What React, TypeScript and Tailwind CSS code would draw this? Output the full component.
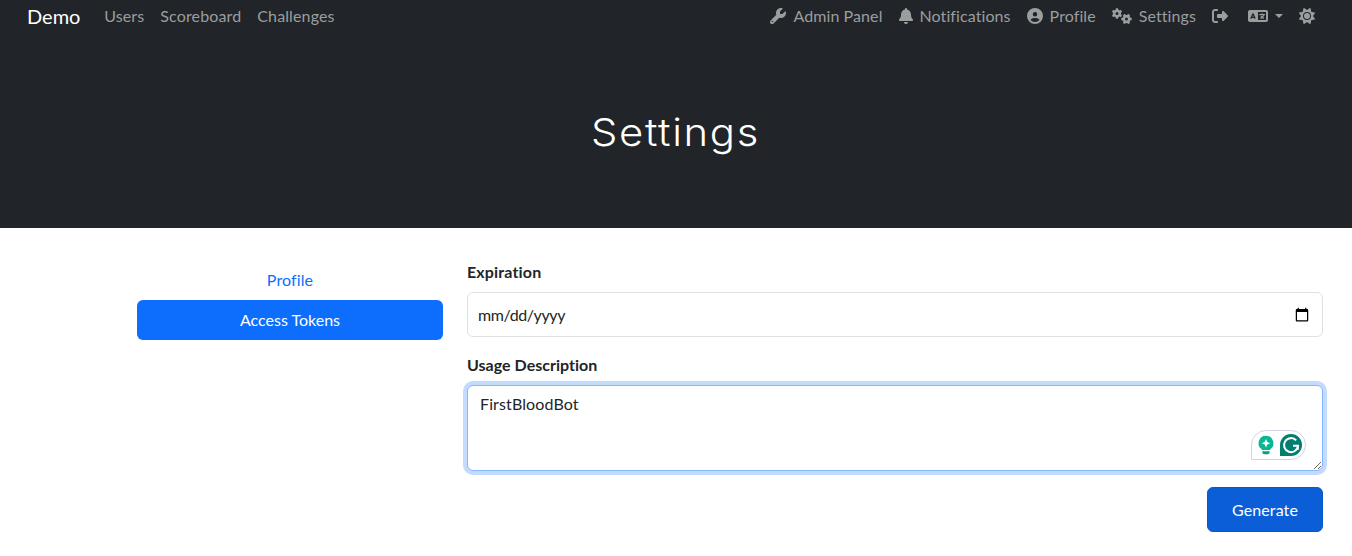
import type { ReactNode } from "react";
import {
  FaWrench,
  FaBell,
  FaCircleUser,
  FaGears,
  FaRightFromBracket,
  FaLanguage,
  FaSun,
} from "react-icons/fa6";

function NavLink({ icon, children }: { icon?: ReactNode; children: ReactNode }) {
  return (
    <a href="#" className="flex items-center gap-[7px] whitespace-nowrap">
      {icon}
      <span>{children}</span>
    </a>
  );
}

function Navbar() {
  return (
    <nav className="flex h-8 items-center justify-between pr-[37px] pl-[27px] text-[#9b9d9e]">
      <div className="flex items-center gap-4 tracking-[0.13px]">
        <a href="#" className="mr-[7.8px] text-xl tracking-normal text-white">
          Demo
        </a>
        <NavLink>Users</NavLink>
        <NavLink>Scoreboard</NavLink>
        <NavLink>Challenges</NavLink>
      </div>
      <div className="flex items-center gap-4 tracking-[0.09px]">
        <NavLink icon={<FaWrench className="size-4" />}>Admin Panel</NavLink>
        <NavLink icon={<FaBell className="h-4 w-[14px]" />}>Notifications</NavLink>
        <NavLink icon={<FaCircleUser className="size-4" />}>Profile</NavLink>
        <NavLink icon={<FaGears className="h-4 w-5" />}>Settings</NavLink>
        <FaRightFromBracket className="size-4" />
        <div className="ml-1 flex items-center gap-[7px]">
          <FaLanguage className="h-4 w-5" />
          <span className="size-0 border-x-[4.5px] border-t-[4.5px] border-x-transparent border-t-current" />
        </div>
        <FaSun className="size-4" />
      </div>
    </nav>
  );
}

function Assistant() {
  return (
    <div className="absolute right-[17px] bottom-[11px] flex h-[30px] w-[55px] items-center justify-center gap-[5px] rounded-[15px] rounded-bl-none border border-[#d2d4e0] bg-white pl-px">
      <svg viewBox="0 0 18 20" className="h-5 w-[18px]">
        <path d="M9 .8a7.4 7.4 0 0 0-4 13.6V15h8v-.6A7.4 7.4 0 0 0 9 .8Z" fill="#08b894" />
        <path d="M5.4 16.2h7.2v1.3a1.8 1.8 0 0 1-1.8 1.8H7.2a1.8 1.8 0 0 1-1.8-1.8Z" fill="#08a084" />
        <path d="M9 3.9 10.3 6.9 13.3 8.2 10.3 9.5 9 12.5 7.7 9.5 4.7 8.2 7.7 6.9Z" fill="#fff" />
      </svg>
      <svg viewBox="0 0 22 22" className="size-[22px]">
        <path d="M11 0a11 11 0 1 1 0 22H0V11A11 11 0 0 1 11 0Z" fill="#027e6f" />
        <path d="M16.2 6.4A7 7 0 1 0 18 11.7h-5M17.9 11.7v4.1" fill="none" stroke="#fff" strokeWidth="2" />
      </svg>
    </div>
  );
}

export default function App() {
  return (
    <div className="h-[556px] w-[1352px] overflow-hidden bg-white font-['Lato',sans-serif] text-base leading-6 text-[#212529]">
      <header className="h-[228px] bg-[#212529]">
        <Navbar />
        <h1 className="scale-x-[1.1] pt-[70px] pr-px text-center font-['Inter',sans-serif] text-[38px] leading-[60px] font-light tracking-[1.5px] text-white [font-optical-sizing:none]">
          Settings
        </h1>
      </header>
      <main className="flex gap-6 pt-8 pr-[29px] pl-[137px]">
        <aside className="flex w-[306px] flex-col text-center">
          <a href="#" className="flex h-10 items-center justify-center tracking-[0.12px] text-[#0d6efd]">
            Profile
          </a>
          <a href="#" className="flex h-10 items-center justify-center rounded-md bg-[#0d6efd] text-white">
            Access Tokens
          </a>
        </aside>
        <form className="flex flex-1 flex-col">
          <label className="mb-2 font-bold tracking-[0.15px] [font-variant-ligatures:none]">Expiration</label>
          <input
            type="date"
            className="h-[45px] w-full rounded-md border border-[#dee2e6] bg-white pr-[10px] pl-[10px] [&::-webkit-datetime-edit-day-field]:p-0 [&::-webkit-datetime-edit-fields-wrapper]:tracking-[-0.4px] [&::-webkit-datetime-edit-month-field]:p-0 [&::-webkit-datetime-edit-year-field]:p-0"
          />
          <label className="mt-4 mb-2 font-bold tracking-[0.02px] [font-variant-ligatures:none]">Usage Description</label>
          <div className="relative h-[86px]">
            <textarea
              defaultValue="FirstBloodBot"
              spellCheck={false}
              className="block h-[86px] w-full resize rounded-md border border-[#86b7fe] bg-white px-3 py-[6px] tracking-[0.12px] shadow-[0_0_0_4px_#c3dbff] outline-none"
            />
            <Assistant />
          </div>
          <button
            type="button"
            className="mt-4 h-[45px] w-[116px] self-end rounded-md border border-[#0a58ca] bg-[#0b5ed7] tracking-[0.1px] text-white"
          >
            Generate
          </button>
        </form>
      </main>
    </div>
  );
}
